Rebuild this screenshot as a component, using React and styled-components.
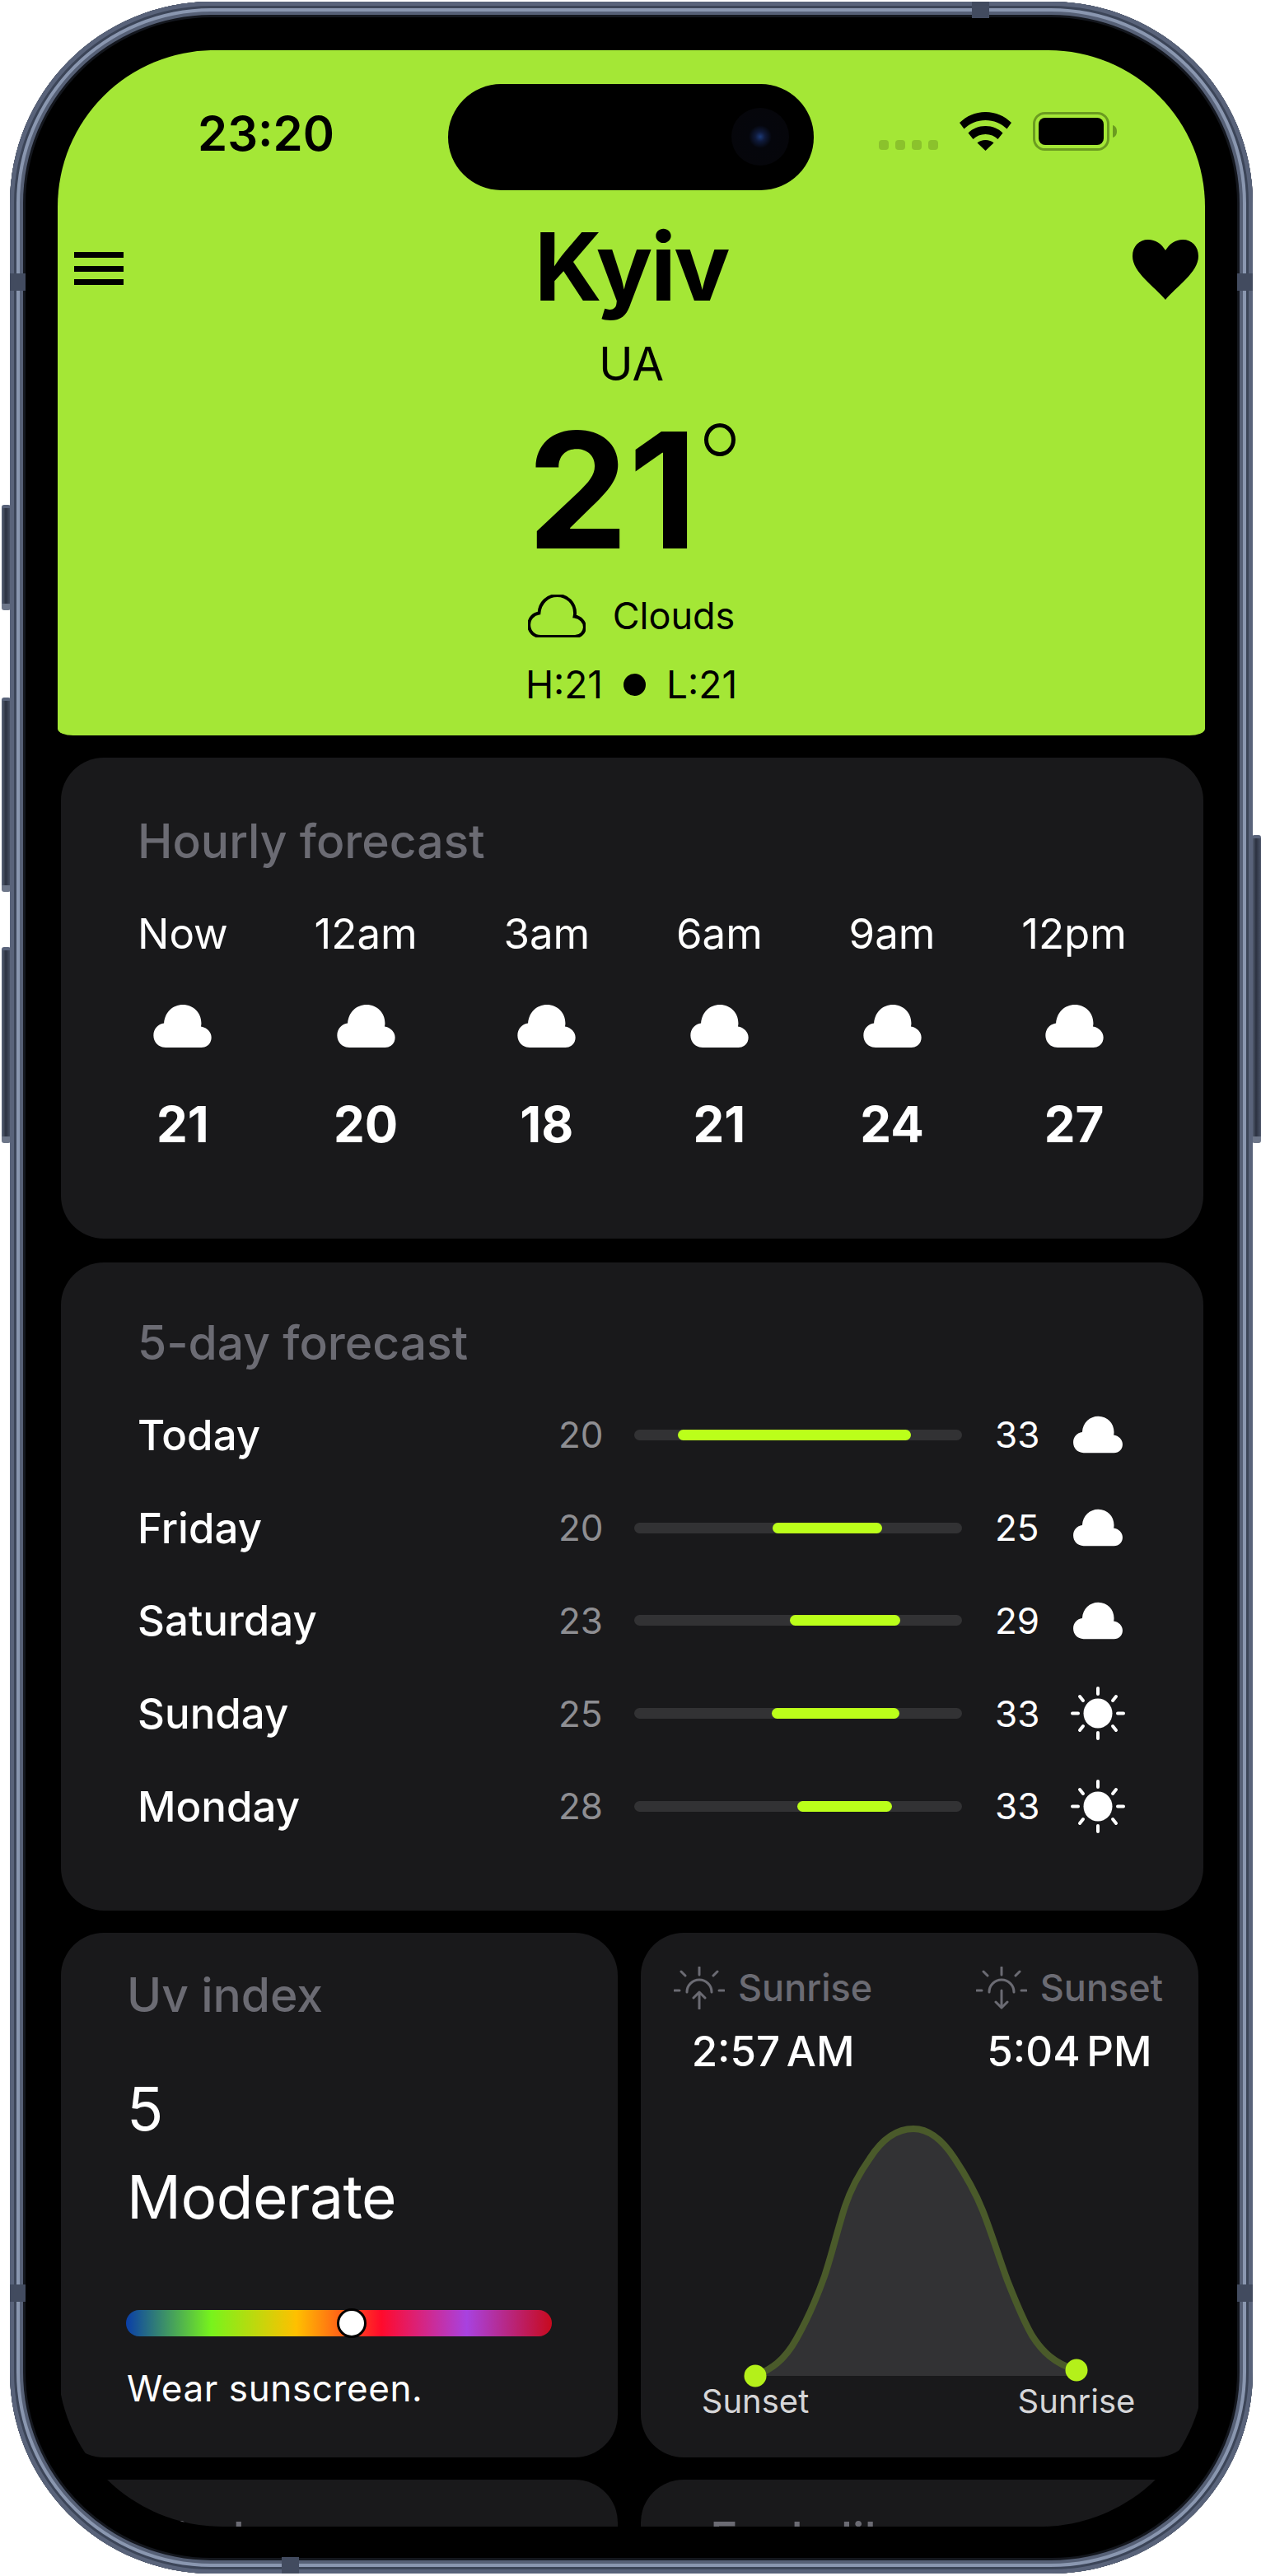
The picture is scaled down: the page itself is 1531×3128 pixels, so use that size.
import styled, { createGlobalStyle } from "styled-components";

const GlobalStyle = createGlobalStyle`
  html, body {
    margin: 0;
    padding: 0;
    background: #fff;
  }
  * {
    box-sizing: border-box;
  }
`;

const Page = styled.div`
  width: 1531px;
  height: 3128px;
  padding: 2px 10px 3px 12px;
  font-family: Inter, "Noto Sans", sans-serif;
  position: relative;
  overflow: hidden;
`;

const SideButton = styled.div`
  position: absolute;
  top: ${({ $top }) => $top}px;
  height: ${({ $height }) => $height}px;
  ${({ $right }) => ($right ? "right: 0;" : "left: 2px;")}
  width: 11px;
  background: linear-gradient(to right, #5b6579, #2b3140 45%, #4a5367);
  border-radius: 3px;
  border-top: 4px solid #59637a;
  border-bottom: 8px solid #6d7689;
`;

const Frame = styled.div`
  width: 100%;
  height: 100%;
  background: #000;
  border-radius: 245px;
  padding: 59px 46px 57px 58px;
  position: relative;
  box-shadow: inset 0 0 0 5px #59637a, inset 0 0 0 8px #3c4558,
    inset 0 0 0 12px #8a97b0, inset 0 0 0 16px #566076,
    inset 0 0 0 19px #14171e;
`;

const FrameNotch = styled.div`
  position: absolute;
  background: #424b5f;
  ${({ $place }) => $place}
`;

const Screen = styled.div`
  width: 1393px;
  height: 3007px;
  background: #000;
  border-radius: 190px 190px 200px 200px;
  overflow: hidden;
`;

const Hero = styled.header`
  height: 832px;
  background: #a4e736;
  border-radius: 0 0 19px 19px / 0 0 8px 8px;
  color: #000;
  position: relative;
  display: flex;
  flex-direction: column;
  align-items: center;
`;

const StatusBar = styled.div`
  position: absolute;
  top: 0;
  left: 0;
  right: 0;
  height: 200px;
`;

const Clock = styled.span`
  position: absolute;
  left: 170px;
  top: 66px;
  font-size: 58px;
  font-weight: 600;
  line-height: 70px;
`;

const Island = styled.div`
  position: absolute;
  left: 474px;
  top: 41px;
  width: 444px;
  height: 129px;
  border-radius: 65px;
  background: #000;
`;

const Lens = styled.div`
  position: absolute;
  right: 30px;
  top: 29px;
  width: 70px;
  height: 70px;
  border-radius: 50%;
  background: radial-gradient(circle at 50% 50%, #1c3a78 0, #0f1a3a 12%, #05060c 28%, #06060a 100%);
`;

const StatusIcons = styled.div`
  position: absolute;
  left: 997px;
  top: 75px;
  display: flex;
  align-items: flex-end;
`;

const SignalDots = styled.div`
  display: flex;
  gap: 8px;
  margin-right: 26px;
  margin-bottom: 1px;
`;

const SignalDot = styled.i`
  width: 12px;
  height: 12px;
  border-radius: 4px;
  background: #8bc22c;
`;

const BatterySlot = styled.div`
  margin-left: 26px;
  line-height: 0;
`;

const Menu = styled.button`
  position: absolute;
  left: 20px;
  top: 245px;
  width: 60px;
  height: 40px;
  padding: 0;
  border: 0;
  background: none;
  display: flex;
  flex-direction: column;
  justify-content: space-between;

  > span {
    height: 7px;
    background: #000;
  }
`;

const Favourite = styled.div`
  position: absolute;
  right: 8px;
  top: 230px;
  line-height: 0;
`;

const City = styled.h1`
  margin: 198px 0 0;
  font-size: 114px;
  font-weight: 700;
  line-height: 130px;
  letter-spacing: -2.5px;
`;

const Country = styled.div`
  margin-top: 19px;
  font-size: 56px;
  line-height: 68px;
`;

const TempRow = styled.div`
  display: flex;
  align-items: flex-start;
  margin-top: 14px;
  font-size: 195px;
  font-weight: 700;
  line-height: 210px;
`;

const DegreeRing = styled.span`
  width: 38px;
  height: 40px;
  margin: 24px 0 0 8px;
  border-radius: 50%;
  border: 5px solid #000;
`;

const Condition = styled.div`
  margin-top: 20px;
  display: flex;
  align-items: center;
  gap: 33px;
  font-size: 45px;
  line-height: 56px;
`;

const HighLow = styled.div`
  margin-top: 28px;
  display: flex;
  align-items: center;
  gap: 25px;
  font-size: 46px;
  line-height: 54px;
`;

const Bullet = styled.i`
  width: 27px;
  height: 27px;
  border-radius: 50%;
  background: #000;
`;

const Card = styled.section`
  background: #19191b;
  border-radius: 52px;
  color: #fff;
`;

const Title = styled.h2`
  margin: 0;
  font-size: 57px;
  font-weight: 500;
  line-height: 68px;
  color: #6b6b73;
`;

const HourlyCard = styled(Card)`
  width: 1387px;
  height: 584px;
  margin: 27px 0 0 4px;
  padding: 68px 93px 0;
`;

const HourlyRow = styled.div`
  margin-top: 48px;
  display: flex;
  justify-content: space-between;
`;

const HourColumn = styled.div`
  display: flex;
  flex-direction: column;
  align-items: center;
`;

const HourLabel = styled.div`
  font-size: 51px;
  line-height: 60px;
`;

const HourIcon = styled.div`
  margin-top: 55px;
  line-height: 0;
`;

const HourTemp = styled.div`
  margin-top: 57px;
  font-size: 60px;
  font-weight: 700;
  line-height: 70px;
`;

const DailyCard = styled(Card)`
  width: 1387px;
  height: 787px;
  margin: 29px 0 0 4px;
  padding: 64px 95px 0 93px;
`;

const DailyList = styled.div`
  margin-top: 21px;
`;

const DayRow = styled.div`
  display: grid;
  grid-template-columns: 1fr 52px 398px 52px 66px;
  column-gap: 40px;
  align-items: center;
  height: 112.75px;
`;

const DayName = styled.div`
  font-size: 51px;
  font-weight: 500;
`;

const LowTemp = styled.div`
  font-size: 44px;
  color: #8e8e92;
  text-align: right;
`;

const HighTemp = styled.div`
  font-size: 44px;
  text-align: left;
`;

const Track = styled.div`
  height: 13px;
  border-radius: 7px;
  background: #323234;
  position: relative;
`;

const TrackFill = styled.div`
  position: absolute;
  top: 0;
  bottom: 0;
  border-radius: 7px;
  background: #bbff1a;
`;

const DayIcon = styled.div`
  display: flex;
  justify-content: center;
  line-height: 0;
`;

const BottomRow = styled.div`
  margin: 27px 0 0 4px;
  display: grid;
  grid-template-columns: 676px 677px;
  column-gap: 28px;
  row-gap: 27px;
`;

const UvCard = styled(Card)`
  height: 637px;
  padding: 42px 80px 0;
`;

const UvValue = styled.div`
  margin-top: 50px;
  font-size: 73px;
  line-height: 107px;
  letter-spacing: -0.5px;
`;

const UvScale = styled.div`
  position: relative;
  height: 32px;
  margin: 84px 0 0 -1px;
  width: 517px;
  border-radius: 16px;
  background: linear-gradient(
    to right,
    #0a3ea8 0%,
    #78f31c 20%,
    #ffc000 40%,
    #ff0a2c 60%,
    #a842e0 80%,
    #c80a1e 100%
  );
`;

const UvThumb = styled.div`
  position: absolute;
  top: -2px;
  width: 36px;
  height: 36px;
  margin-left: -18px;
  border-radius: 50%;
  background: #fff;
  border: 3px solid #000;
`;

const UvNote = styled.div`
  margin-top: 36px;
  font-size: 44px;
  line-height: 54px;
  letter-spacing: 0.6px;
`;

const SunCard = styled(Card)`
  height: 637px;
  position: relative;
  padding: 40px 43px 0 40px;
`;

const SunHead = styled.div`
  display: flex;
  justify-content: space-between;
`;

const SunBlock = styled.div`
  display: flex;
  flex-direction: column;
  align-items: center;
`;

const SunLabel = styled.div`
  display: flex;
  align-items: center;
  gap: 16px;
  font-size: 45px;
  font-weight: 500;
  line-height: 54px;
  color: #6b6b73;
`;

const SunTime = styled.div`
  margin-top: 20px;
  font-size: 51px;
  font-weight: 500;
  line-height: 60px;
  word-spacing: -6px;
`;

const SunChart = styled.svg`
  position: absolute;
  left: 0;
  top: 0;
`;

const ChartLabel = styled.span`
  position: absolute;
  top: 546px;
  left: ${({ $x }) => $x}px;
  transform: translateX(-50%);
  font-size: 40px;
  line-height: 46px;
  color: #d6d6d8;
`;

const ClippedCard = styled(Card)`
  height: 200px;
  padding: 39px 82px 0;
`;

const ClippedRightCard = styled(Card)`
  height: 200px;
  padding: 39px 84px 0;
`;

const CloudPath =
  "M15.5 52 C7 52 1 45.5 1 37.5 C1 29.5 6.5 24 13.5 23 C14.5 10 24 1 36 1 C48.5 1 58 10.5 58 23 C58 24.5 57.8 25.8 57.5 27 C64.5 28 70 33.5 70 40 C70 47 65 52 58 52 Z";

const Cloud = ({ width = 73, height = 54 }) => (
  <svg width={width} height={height} viewBox="0 0 71 53" fill="#fff">
    <path d={CloudPath} />
  </svg>
);

const Sun = () => (
  <svg width="66" height="65" viewBox="0 0 66 65" fill="none">
    <ellipse cx="33" cy="32.5" rx="17.5" ry="18" fill="#fff" />
    <g stroke="#fff" strokeWidth="4" strokeLinecap="round">
      <path d="M33 2v7M33 56v7M2 32.5h7M57 32.5h7M11 12l4 5M55 12l-4 5M11 53l4-5M55 53l-4-5" />
    </g>
  </svg>
);

const OutlineCloud = () => (
  <svg width="70" height="52" viewBox="0 0 71 53" fill="none">
    <path d={CloudPath} stroke="#000" strokeWidth="4" />
  </svg>
);

const Wifi = () => (
  <svg width="63" height="47" viewBox="0 0 63 47" fill="#000">
    <path d="M31.5 0C19 0 8.500 5 0 13l5.500 7.500C12.500 14 21.500 10 31.500 10S50.500 14 57.500 20.500L63 13C54.500 5 44 0 31.500 0Z" />
    <path d="M31.500 17C23 17 16 20 10.500 25.500L16.500 33C20.500 29 25.500 27 31.500 27S42.500 29 46.500 33L52.500 25.500C47 20 40 17 31.500 17Z" />
    <path d="M31.500 34C27.500 34 24 35.200 21.500 37.500L31.500 47 41.500 37.500C39 35.200 35.500 34 31.500 34Z" />
  </svg>
);

const Battery = () => (
  <svg width="103" height="47" viewBox="0 0 103 47" fill="none">
    <rect x="1.500" y="1.500" width="90" height="44" rx="13" stroke="#6b9c20" strokeWidth="3" />
    <rect x="7" y="7" width="79" height="33" rx="8" fill="#000" />
    <path d="M97 16c3.500 1 5 4 5 7.500s-1.500 6.500-5 7.500z" fill="#6b9c20" />
  </svg>
);

const Heart = () => (
  <svg width="80" height="74" viewBox="0 0 80 74" fill="#000">
    <path d="M40 73C27 57 0 40 0 20 0 8 8 0 19 0c9 0 16 5 21 13C45 5 52 0 61 0c11 0 19 8 19 20 0 20-27 37-40 53Z" />
  </svg>
);

const SunEvent = ({ down }) => (
  <svg width="62" height="52" viewBox="0 0 62 52" fill="none" stroke="#6b6b73" strokeWidth="3" strokeLinecap="round" strokeLinejoin="round">
    <path d="M31 1v9M9 6l5 5M53 6l-5 5M1 29h6M55 29h6" />
    <path d="M16 31a15 15 0 1 1 30 0" />
    {down ? <path d="M31 29v21M24 43l7 7 7-7" /> : <path d="M31 51V31M24 38l7-7 7 7" />}
  </svg>
);

const bellCurve =
  "M139 538 C158 530 174 520 189 493 C202 470 213 445 223 417 C232 390 239 360 248 332 C256 308 266 291 278 274 C292 252 310 238 331 238 C352 238 368 254 381 274 C393 292 405 312 415 337 C425 362 434 392 445 422 C456 450 464 470 475 489 C487 508 502 523 529 531";

const hours = [
  ["Now", 21],
  ["12am", 20],
  ["3am", 18],
  ["6am", 21],
  ["9am", 24],
  ["12pm", 27],
];

const days = [
  { name: "Today", low: 20, high: 33, from: 53, to: 336, icon: "cloud" },
  { name: "Friday", low: 20, high: 25, from: 168, to: 301, icon: "cloud" },
  { name: "Saturday", low: 23, high: 29, from: 189, to: 323, icon: "cloud" },
  { name: "Sunday", low: 25, high: 33, from: 167, to: 322, icon: "sun" },
  { name: "Monday", low: 28, high: 33, from: 198, to: 313, icon: "sun" },
];

export default function App() {
  return (
    <Page>
      <GlobalStyle />
      <SideButton $top={613} $height={128} />
      <SideButton $top={847} $height={236} />
      <SideButton $top={1150} $height={238} />
      <SideButton $right $top={1014} $height={374} />
      <Frame>
        <FrameNotch $place="left: 1168px; top: 0; width: 21px; height: 20px;" />
        <FrameNotch $place="left: 0; top: 330px; width: 19px; height: 21px;" />
        <FrameNotch $place="right: 0; top: 330px; width: 19px; height: 21px;" />
        <FrameNotch $place="left: 0; bottom: 330px; width: 19px; height: 21px;" />
        <FrameNotch $place="right: 0; bottom: 330px; width: 19px; height: 21px;" />
        <FrameNotch $place="left: 330px; bottom: 0; width: 21px; height: 20px;" />
        <Screen>
          <Hero>
            <StatusBar>
              <Clock>23:20</Clock>
              <Island>
                <Lens />
              </Island>
              <StatusIcons>
                <SignalDots>
                  <SignalDot />
                  <SignalDot />
                  <SignalDot />
                  <SignalDot />
                </SignalDots>
                <Wifi />
                <BatterySlot>
                  <Battery />
                </BatterySlot>
              </StatusIcons>
            </StatusBar>
            <Menu aria-label="Menu">
              <span />
              <span />
              <span />
            </Menu>
            <Favourite>
              <Heart />
            </Favourite>
            <City>Kyiv</City>
            <Country>UA</Country>
            <TempRow>
              21
              <DegreeRing />
            </TempRow>
            <Condition>
              <OutlineCloud />
              <span>Clouds</span>
            </Condition>
            <HighLow>
              <span>H:21</span>
              <Bullet />
              <span>L:21</span>
            </HighLow>
          </Hero>

          <HourlyCard>
            <Title>Hourly forecast</Title>
            <HourlyRow>
              {hours.map(([label, temp]) => (
                <HourColumn key={label}>
                  <HourLabel>{label}</HourLabel>
                  <HourIcon>
                    <Cloud />
                  </HourIcon>
                  <HourTemp>{temp}</HourTemp>
                </HourColumn>
              ))}
            </HourlyRow>
          </HourlyCard>

          <DailyCard>
            <Title>5-day forecast</Title>
            <DailyList>
              {days.map((day) => (
                <DayRow key={day.name}>
                  <DayName>{day.name}</DayName>
                  <LowTemp>{day.low}</LowTemp>
                  <Track>
                    <TrackFill style={{ left: day.from, width: day.to - day.from }} />
                  </Track>
                  <HighTemp>{day.high}</HighTemp>
                  <DayIcon>
                    {day.icon === "cloud" ? <Cloud width={62} height={46} /> : <Sun />}
                  </DayIcon>
                </DayRow>
              ))}
            </DailyList>
          </DailyCard>

          <BottomRow>
            <UvCard>
              <Title>Uv index</Title>
              <UvValue>
                5
                <br />
                Moderate
              </UvValue>
              <UvScale>
                <UvThumb style={{ left: "53%" }} />
              </UvScale>
              <UvNote>Wear sunscreen.</UvNote>
            </UvCard>
            <SunCard>
              <SunHead>
                <SunBlock>
                  <SunLabel>
                    <SunEvent />
                    Sunrise
                  </SunLabel>
                  <SunTime>2:57 AM</SunTime>
                </SunBlock>
                <SunBlock>
                  <SunLabel>
                    <SunEvent down />
                    Sunset
                  </SunLabel>
                  <SunTime>5:04 PM</SunTime>
                </SunBlock>
              </SunHead>
              <SunChart width="677" height="637" viewBox="0 0 677 637" fill="none">
                <path d={`${bellCurve} L529 538 H139 Z`} fill="#323234" />
                <path d={bellCurve} stroke="#4a5a2a" strokeWidth="8" />
                <circle cx="139" cy="538" r="13.500" fill="#b4f01a" />
                <circle cx="529" cy="531" r="13.500" fill="#b4f01a" />
              </SunChart>
              <ChartLabel $x={139}>Sunset</ChartLabel>
              <ChartLabel $x={529}>Sunrise</ChartLabel>
            </SunCard>
            <ClippedCard>
              <Title>Wind</Title>
            </ClippedCard>
            <ClippedRightCard>
              <Title>Feels like</Title>
            </ClippedRightCard>
          </BottomRow>
        </Screen>
      </Frame>
    </Page>
  );
}
